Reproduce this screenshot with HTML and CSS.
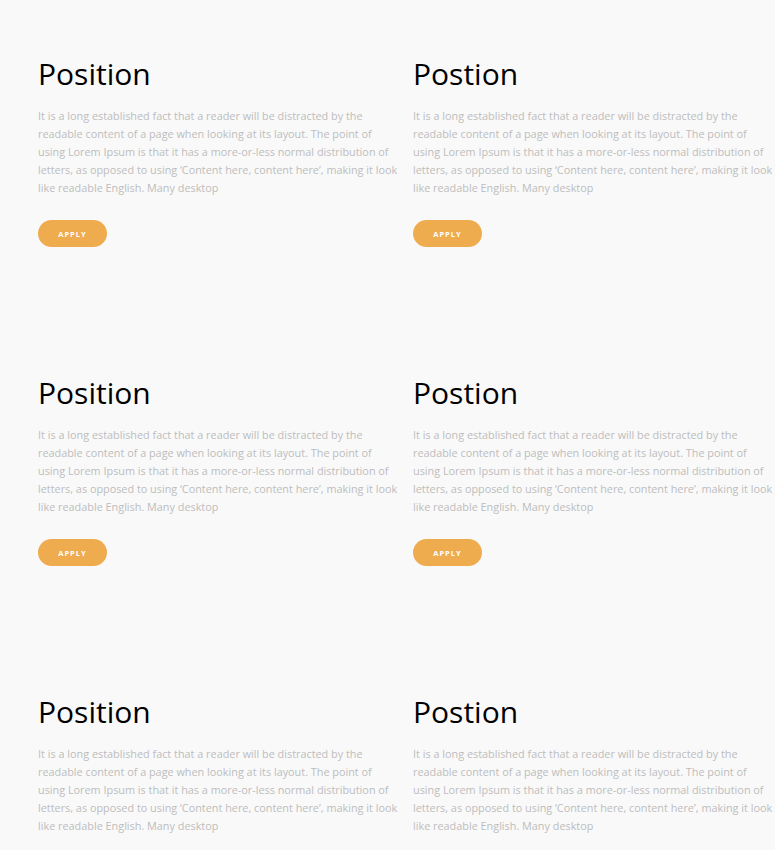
FILE: index.html
```html
<!DOCTYPE html>
<html>
<head>
<meta charset="utf-8">
<link rel="stylesheet" href="styles.css">
</head>
<body>
<main class="grid">
  <section class="job">
    <h2 class="job-title">Position</h2>
    <p class="job-text">It is a long established fact that a reader will be distracted by the readable content of a page when looking at its layout. The point of using Lorem Ipsum is that it has a more-or-less normal distribution of letters, as opposed to using ‘Content here, content here’, making it look like readable English. Many desktop</p>
    <a class="apply" href="#">APPLY</a>
  </section>
  <section class="job">
    <h2 class="job-title">Postion</h2>
    <p class="job-text">It is a long established fact that a reader will be distracted by the readable content of a page when looking at its layout. The point of using Lorem Ipsum is that it has a more-or-less normal distribution of letters, as opposed to using ‘Content here, content here’, making it look like readable English. Many desktop</p>
    <a class="apply" href="#">APPLY</a>
  </section>
  <section class="job">
    <h2 class="job-title">Position</h2>
    <p class="job-text">It is a long established fact that a reader will be distracted by the readable content of a page when looking at its layout. The point of using Lorem Ipsum is that it has a more-or-less normal distribution of letters, as opposed to using ‘Content here, content here’, making it look like readable English. Many desktop</p>
    <a class="apply" href="#">APPLY</a>
  </section>
  <section class="job">
    <h2 class="job-title">Postion</h2>
    <p class="job-text">It is a long established fact that a reader will be distracted by the readable content of a page when looking at its layout. The point of using Lorem Ipsum is that it has a more-or-less normal distribution of letters, as opposed to using ‘Content here, content here’, making it look like readable English. Many desktop</p>
    <a class="apply" href="#">APPLY</a>
  </section>
  <section class="job">
    <h2 class="job-title">Position</h2>
    <p class="job-text">It is a long established fact that a reader will be distracted by the readable content of a page when looking at its layout. The point of using Lorem Ipsum is that it has a more-or-less normal distribution of letters, as opposed to using ‘Content here, content here’, making it look like readable English. Many desktop</p>
    <a class="apply" href="#">APPLY</a>
  </section>
  <section class="job">
    <h2 class="job-title">Postion</h2>
    <p class="job-text">It is a long established fact that a reader will be distracted by the readable content of a page when looking at its layout. The point of using Lorem Ipsum is that it has a more-or-less normal distribution of letters, as opposed to using ‘Content here, content here’, making it look like readable English. Many desktop</p>
    <a class="apply" href="#">APPLY</a>
  </section>
</main>
</body>
</html>
```

FILE: styles.css
```css
html, body {
  margin: 0;
  padding: 0;
  background: #f9f9f9;
  font-family: "Open Sans", "Liberation Sans", sans-serif;
}

.grid {
  display: grid;
  grid-template-columns: 375px 375px;
  padding: 56px 0 0 38px;
  row-gap: 128px;
}

.job {
  padding-right: 13px;
  display: flex;
  flex-direction: column;
  align-items: flex-start;
}

.job-title {
  margin: 0;
  font-size: 30px;
  font-weight: 400;
  line-height: 36px;
  color: #000;
}

.job-text {
  margin: 15px 0 0 0;
  font-size: 10.85px;
  line-height: 18px;
  color: #bdbdbd;
}

.apply {
  margin-top: 23px;
  width: 69px;
  height: 27px;
  border-radius: 14px;
  background: #efac4e;
  color: #fff;
  font-size: 7.5px;
  font-weight: 700;
  letter-spacing: 1px;
  text-decoration: none;
  display: flex;
  align-items: center;
  justify-content: center;
}
```
